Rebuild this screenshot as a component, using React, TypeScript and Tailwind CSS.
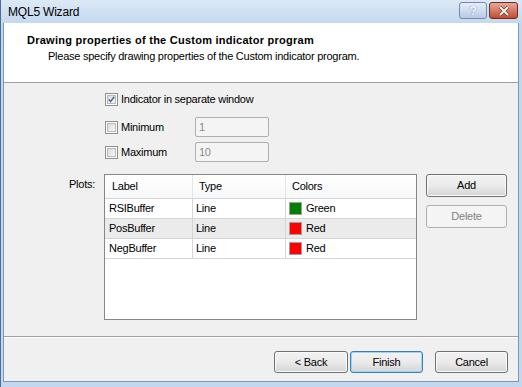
import React from 'react';

const font = { fontFamily: '"Liberation Sans", Arial, sans-serif' };

type IBoxProps = { checked?: boolean };
function CheckBox({ checked }: IBoxProps) {
  return (
    <div className="w-[13px] h-[13px] border border-[#8e8f8f] bg-white p-[1px] shrink-0">
      <div className="w-full h-full bg-gradient-to-br from-[#dcdcdc] to-[#f6f6f6] border border-[#b8b8b8] flex items-center justify-center">
        {checked && (
          <svg width="9" height="9" viewBox="0 0 9 9">
            <path d="M1 4.5 L3.5 7 L8 1" stroke="#4a5f97" strokeWidth="1.8" fill="none" />
          </svg>
        )}
      </div>
    </div>
  );
}

type IBtnProps = { label: string; disabled?: boolean; primary?: boolean; className?: string };
function WinButton({ label, disabled, primary, className }: IBtnProps) {
  if (disabled) {
    return (
      <div
        className={`flex items-center justify-center rounded-[3px] border border-[#adb2b5] bg-[#f4f4f4] text-[#838383] text-[11px] ${className}`}
      >
        {label}
      </div>
    );
  }
  return (
    <div
      className={`flex items-center justify-center rounded-[3px] border ${
        primary ? 'border-[#3c7fb1] shadow-[inset_0_0_0_1px_#9fd5f4]' : 'border-[#707070] shadow-[inset_0_0_0_1px_#fbfbfb]'
      } bg-gradient-to-b from-[#f2f2f2] via-[#ebebeb] to-[#d4d4d4] text-black text-[11px] ${className}`}
    >
      {label}
    </div>
  );
}

const rows = [
  { label: 'RSIBuffer', type: 'Line', color: '#008000', name: 'Green', bg: 'bg-white' },
  { label: 'PosBuffer', type: 'Line', color: '#ff0000', name: 'Red', bg: 'bg-[#ebebeb]' },
  { label: 'NegBuffer', type: 'Line', color: '#ff0000', name: 'Red', bg: 'bg-white' },
];

export default function App() {
  return (
    <div
      style={font}
      className="w-[522px] h-[387px] flex flex-col bg-[#c3d8ee] border-l border-[#4a6f96] overflow-hidden tracking-[-0.25px]"
    >
      {/* title bar */}
      <div className="h-[23px] flex items-center justify-between bg-gradient-to-b from-[#dde9f6] to-[#c4d8ee] pl-[7px] pr-[4px] shrink-0">
        <span className="text-[12px] text-black tracking-[-0.2px]">MQL5 Wizard</span>
        <div className="flex gap-[2px] self-start mt-[2px]">
          <div className="w-[28px] h-[17px] rounded-[3px] border border-[#6d8cb0] bg-gradient-to-b from-[#e6eef8] to-[#b7cbe3] flex items-center justify-center text-[12px] font-bold text-white [text-shadow:0_0_1px_#3d5a80]">
            ?
          </div>
          <div className="w-[29px] h-[17px] rounded-[3px] border border-[#6e2d22] bg-gradient-to-b from-[#e7a797] to-[#c14a30] flex items-center justify-center">
            <svg width="12" height="10" viewBox="0 0 12 10">
              <path d="M2 1 L10 9 M10 1 L2 9" stroke="#3b1a12" strokeWidth="3" />
              <path d="M2 1 L10 9 M10 1 L2 9" stroke="#ffffff" strokeWidth="1.8" />
            </svg>
          </div>
        </div>
      </div>

      {/* client */}
      <div className="flex-1 ml-[2px] mr-[3px] mb-[5px] border-x border-b border-[#7d98b6] flex flex-col bg-[#f0f0f0]">
        {/* header */}
        <div className="h-[60px] bg-white border-b border-[#a0a0a0] pl-[23px] pt-[10px] shrink-0">
          <div className="text-[11px] font-bold text-black leading-[14px] tracking-[0.25px]">
            Drawing properties of the Custom indicator program
          </div>
          <div className="text-[11px] text-black leading-[14px] mt-[2px] pl-[21px]">
            Please specify drawing properties of the Custom indicator program.
          </div>
        </div>

        {/* body */}
        <div className="h-[254px] border-b border-[#a0a0a0] shadow-[0_1px_0_#ffffff] flex flex-col pl-[101px] pt-[10px] shrink-0">
          <div className="flex items-center gap-[3px] h-[13px]">
            <CheckBox checked />
            <span className="text-[11px] text-black">Indicator in separate window</span>
          </div>
          <div className="flex items-center mt-[11px] h-[20px]">
            <CheckBox />
            <span className="text-[11px] text-black ml-[3px] w-[74px]">Minimum</span>
            <div className="w-[74px] h-[20px] border border-[#afafaf] rounded-[2px] bg-[#f4f4f4] text-[11px] text-[#8a8a8a] pl-[3px] flex items-center">
              1
            </div>
          </div>
          <div className="flex items-center mt-[5px] h-[20px]">
            <CheckBox />
            <span className="text-[11px] text-black ml-[3px] w-[74px]">Maximum</span>
            <div className="w-[74px] h-[20px] border border-[#afafaf] rounded-[2px] bg-[#f4f4f4] text-[11px] text-[#8a8a8a] pl-[3px] flex items-center">
              10
            </div>
          </div>

          <div className="flex mt-[12px] ml-[-36px]">
            <span className="text-[11px] text-black w-[35px] pt-[2px]">Plots:</span>
            <div className="w-[313px] h-[146px] border border-[#828790] bg-white flex flex-col">
              <div className="flex h-[24px] border-b border-[#d5d5d5] text-[11px] text-black bg-gradient-to-b from-white to-[#f7f8f9]">
                <div className="w-[88px] border-r border-[#e5e5e5] pl-[7px] flex items-center">Label</div>
                <div className="w-[93px] border-r border-[#e5e5e5] pl-[6px] flex items-center">Type</div>
                <div className="flex-1 pl-[6px] flex items-center">Colors</div>
              </div>
              {rows.map((r) => (
                <div key={r.label} className={`flex h-[20px] border-b border-[#d5d5d5] text-[11px] text-black ${r.bg}`}>
                  <div className="w-[88px] border-r border-[#d5d5d5] pl-[4px] flex items-center">{r.label}</div>
                  <div className="w-[93px] border-r border-[#d5d5d5] pl-[3px] flex items-center">{r.type}</div>
                  <div className="flex-1 pl-[3px] flex items-center gap-[4px]">
                    <div
                      className="w-[13px] h-[13px] border border-[#a0a0a0]"
                      style={{ backgroundColor: r.color }}
                    />
                    {r.name}
                  </div>
                </div>
              ))}
            </div>
            <div className="flex flex-col ml-[9px] gap-[8px]">
              <WinButton label="Add" className="w-[81px] h-[23px]" />
              <WinButton label="Delete" disabled className="w-[81px] h-[23px]" />
            </div>
          </div>
        </div>

        {/* footer */}
        <div className="flex-1 flex items-start justify-end pt-[14px] pr-[10px]">
          <WinButton label="< Back" className="w-[74px] h-[22px]" />
          <WinButton label="Finish" primary className="w-[73px] h-[22px] ml-[2px]" />
          <WinButton label="Cancel" className="w-[73px] h-[22px] ml-[12px]" />
        </div>
      </div>
    </div>
  );
}
